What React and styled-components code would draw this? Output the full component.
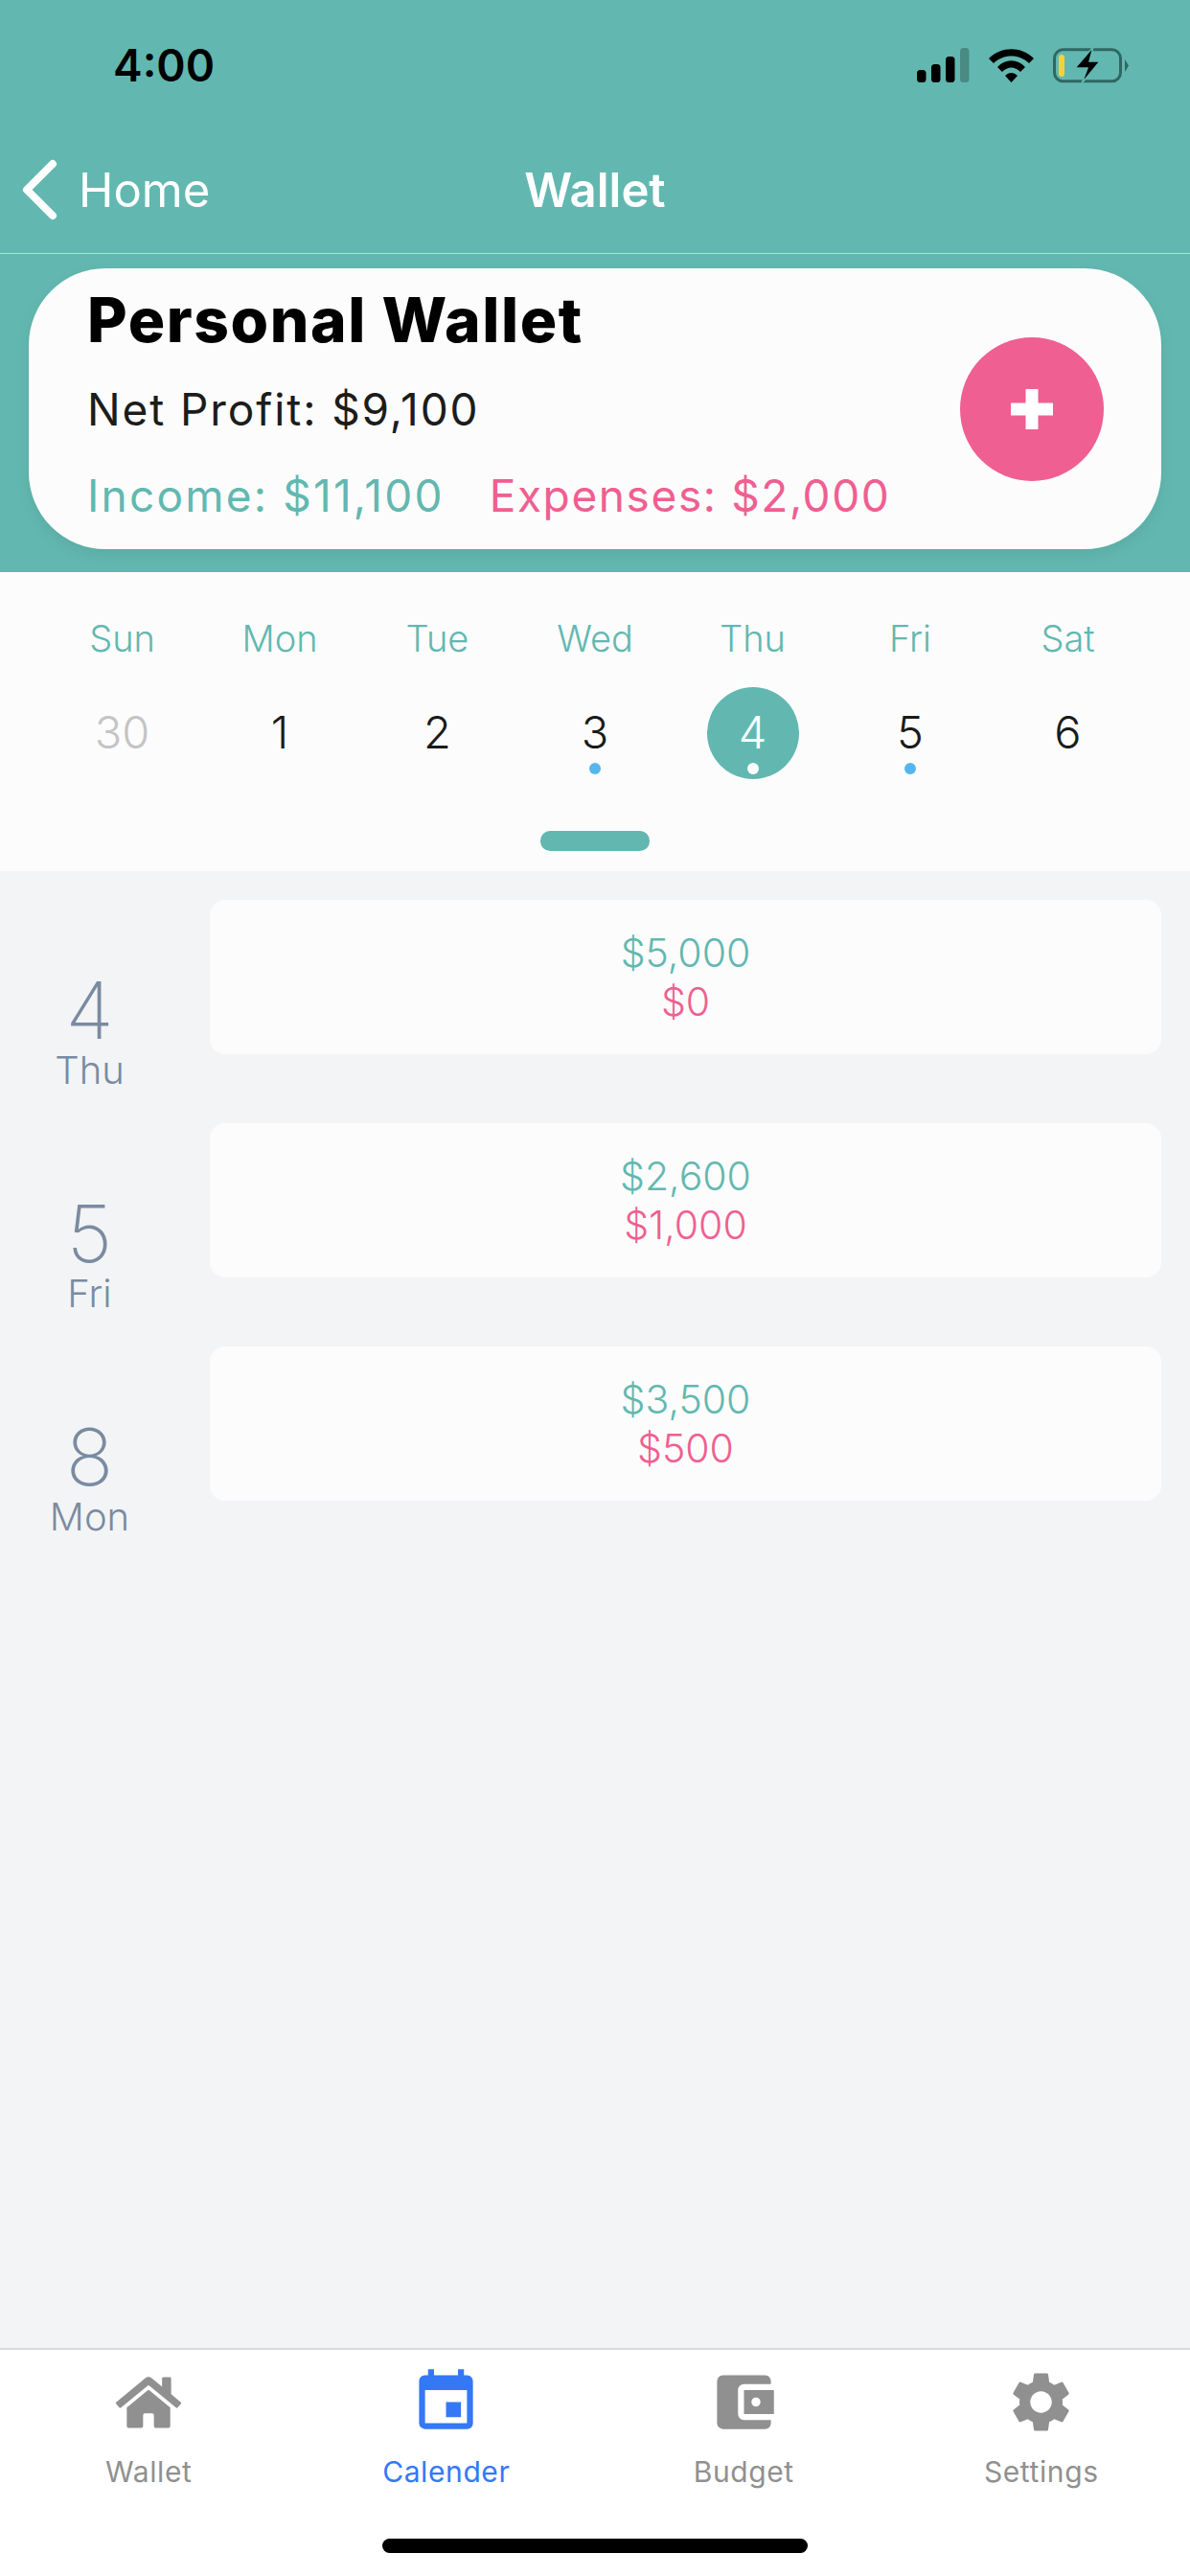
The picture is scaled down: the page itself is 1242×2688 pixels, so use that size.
import React from 'react';
import styled, { createGlobalStyle } from 'styled-components';
import { FaHome } from 'react-icons/fa';
import { MdEvent, MdAccountBalanceWallet, MdSettings } from 'react-icons/md';

const teal = '#62b8b0';
const pink = '#ef5f91';

const days = [
  { name: 'Sun', num: 30, muted: true },
  { name: 'Mon', num: 1 },
  { name: 'Tue', num: 2 },
  { name: 'Wed', num: 3, dot: true },
  { name: 'Thu', num: 4, dot: true, active: true },
  { name: 'Fri', num: 5, dot: true },
  { name: 'Sat', num: 6 }
];

const entries = [
  { day: 4, label: 'Thu', income: '$5,000', expense: '$0' },
  { day: 5, label: 'Fri', income: '$2,600', expense: '$1,000' },
  { day: 8, label: 'Mon', income: '$3,500', expense: '$500' }
];

const tabs = [
  { label: 'Wallet', Icon: FaHome, size: 68 },
  { label: 'Calender', Icon: MdEvent, size: 75, active: true },
  { label: 'Budget', Icon: MdAccountBalanceWallet, size: 75 },
  { label: 'Settings', Icon: MdSettings, size: 75 }
];

const Signal = () => (
  <svg width="55" height="36" viewBox="0 0 55 36">
    <rect x="0" y="23" width="9.5" height="13" rx="3.5" fill="#000" />
    <rect x="15" y="17" width="9.5" height="19" rx="3.5" fill="#000" />
    <rect x="30" y="9" width="9.5" height="27" rx="3.5" fill="#000" />
    <rect x="45" y="0" width="9.5" height="36" rx="3.5" fill="#000" fillOpacity="0.25" />
  </svg>
);

const Wifi = () => (
  <svg width="47" height="35" viewBox="0 0 47 35">
    <path d="M0 10C13 -3 34 -3 47 10L42 15C32 5 15 5 5 15Z" fill="#000" />
    <path d="M9 19C17 10 30 10 38 19L33 24C27 18 20 18 14 24Z" fill="#000" />
    <path d="M17 28C21 24 26 24 30 28L23.5 35Z" fill="#000" />
  </svg>
);

const Battery = () => (
  <svg width="79" height="39" viewBox="0 0 79 39">
    <rect x="1.5" y="2.8" width="69" height="33" rx="9" fill="none" stroke="#2f6763" strokeWidth="3" />
    <rect x="6" y="8" width="6" height="23" rx="3" fill="#f7d13c" />
    <path d="M75 13L79 19.5L75 26Z" fill="#2f6763" />
    <path d="M42 0L23 22H36L30 38L49 15H38Z" fill="#000" stroke={teal} strokeWidth="1.5" />
  </svg>
);

const Chevron = () => (
  <svg width="40" height="64" viewBox="0 0 40 64">
    <path d="M35 5L8 32L35 59" fill="none" stroke="#fff" strokeWidth="8" strokeLinecap="round" strokeLinejoin="round" />
  </svg>
);

const Plus = () => (
  <svg width="44" height="42" viewBox="0 0 44 42">
    <rect x="15.5" y="0" width="13" height="42" fill="#fff" />
    <rect x="0" y="14.5" width="44" height="13" fill="#fff" />
  </svg>
);

export default function App() {
  return (
    <Page>
      <GlobalStyle />
      <Header>
        <StatusBar>
          <Clock>4:00</Clock>
          <StatusIcons>
            <Signal />
            <Wifi />
            <Battery />
          </StatusIcons>
        </StatusBar>
        <NavBar>
          <BackLink>
            <Chevron />
            <span>Home</span>
          </BackLink>
          <NavTitle>Wallet</NavTitle>
        </NavBar>
        <WalletCard>
          <WalletInfo>
            <WalletName>Personal Wallet</WalletName>
            <NetProfit>Net Profit: $9,100</NetProfit>
            <Totals>
              <Total $color={teal} $spacing={2.2}>Income: $11,100</Total>
              <Total $color={pink} $spacing={1.6}>Expenses: $2,000</Total>
            </Totals>
          </WalletInfo>
          <AddButton>
            <Plus />
          </AddButton>
        </WalletCard>
      </Header>

      <Calendar>
        <Week>
          {days.map(d => (
            <DayCol key={d.name}>
              <DayName>{d.name}</DayName>
              <DayNum $muted={d.muted} $active={d.active}>
                {d.num}
                {d.dot ? <Dot $active={d.active} /> : null}
              </DayNum>
            </DayCol>
          ))}
        </Week>
        <Knob />
      </Calendar>

      <Agenda>
        {entries.map(e => (
          <AgendaRow key={e.day}>
            <DateCol>
              <DateNum>{e.day}</DateNum>
              <DateLabel>{e.label}</DateLabel>
            </DateCol>
            <AgendaCard>
              <Amount $color={teal}>{e.income}</Amount>
              <Amount $color={pink}>{e.expense}</Amount>
            </AgendaCard>
          </AgendaRow>
        ))}
      </Agenda>

      <TabBar>
        <Tabs>
          {tabs.map(({ label, Icon, size, active }) => (
            <Tab key={label} $active={active}>
              <TabIcon>
                <Icon size={size} />
              </TabIcon>
              <TabLabel>{label}</TabLabel>
            </Tab>
          ))}
        </Tabs>
        <HomeIndicator />
      </TabBar>
    </Page>
  );
}

const GlobalStyle = createGlobalStyle`
  html, body {
    margin: 0;
    padding: 0;
    background: #f3f4f6;
  }
`;

const Page = styled.div`
  width: 1242px;
  height: 2688px;
  display: flex;
  flex-direction: column;
  overflow: hidden;
  font-family: Inter, 'Liberation Sans', sans-serif;
  background: #f3f4f6;
`;

const Header = styled.div`
  height: 597px;
  background: ${teal};
  display: flex;
  flex-direction: column;
  flex-shrink: 0;
`;

const StatusBar = styled.div`
  height: 132px;
  box-sizing: border-box;
  display: flex;
  align-items: center;
  justify-content: space-between;
  padding: 4px 64px 0 118px;
`;

const Clock = styled.div`
  font-size: 46px;
  font-weight: 600;
  color: #000;
`;

const StatusIcons = styled.div`
  display: flex;
  align-items: center;
  gap: 20px;
`;

const NavBar = styled.div`
  height: 132px;
  border-bottom: 1px solid #c8d5d3;
  position: relative;
  display: flex;
  align-items: center;
  justify-content: center;
`;

const BackLink = styled.div`
  position: absolute;
  left: 20px;
  top: 34px;
  display: flex;
  align-items: center;
  gap: 22px;
  color: #fff;
  font-size: 49px;
  font-weight: 400;
`;

const NavTitle = styled.div`
  color: #fff;
  font-size: 49px;
  font-weight: 600;
`;

const WalletCard = styled.div`
  margin: 15px 30px 0;
  height: 293px;
  box-sizing: border-box;
  padding: 18px 60px 0 61px;
  border-radius: 80px;
  background: #fcfcfc;
  box-shadow: 0 6px 16px rgba(0, 0, 0, 0.07);
  display: flex;
  align-items: center;
  justify-content: space-between;
`;

const WalletInfo = styled.div`
  display: flex;
  flex-direction: column;
  align-self: flex-start;
`;

const WalletName = styled.div`
  font-size: 64px;
  line-height: 72px;
  font-weight: 800;
  letter-spacing: 1.6px;
  color: #000;
`;

const NetProfit = styled.div`
  margin-top: 30px;
  font-size: 46px;
  line-height: 54px;
  letter-spacing: 1.9px;
  color: #1c1c1c;
`;

const Totals = styled.div`
  margin-top: 36px;
  display: flex;
  gap: 47px;
`;

const Total = styled.div`
  font-size: 46px;
  line-height: 54px;
  letter-spacing: ${p => p.$spacing}px;
  color: ${p => p.$color};
`;

const AddButton = styled.div`
  width: 150px;
  height: 150px;
  border-radius: 50%;
  background: ${pink};
  display: flex;
  align-items: center;
  justify-content: center;
  flex-shrink: 0;
  margin-bottom: 18px;
`;

const Calendar = styled.div`
  height: 312px;
  flex-shrink: 0;
  background: #fcfcfc;
  display: flex;
  flex-direction: column;
  align-items: center;
`;

const Week = styled.div`
  width: 100%;
  box-sizing: border-box;
  padding: 44px 0 0 0;
  display: grid;
  grid-template-columns: repeat(7, 164.5px);
  justify-content: center;
`;

const DayCol = styled.div`
  display: flex;
  flex-direction: column;
  align-items: center;
`;

const DayName = styled.div`
  font-size: 38px;
  line-height: 50px;
  font-weight: 300;
  color: ${teal};
`;

const DayNum = styled.div`
  position: relative;
  margin-top: 26px;
  width: 96px;
  height: 96px;
  box-sizing: border-box;
  padding-bottom: 3px;
  border-radius: 50%;
  display: flex;
  align-items: center;
  justify-content: center;
  font-size: 47px;
  font-weight: 300;
  background: ${p => (p.$active ? teal : 'transparent')};
  color: ${p => (p.$active ? '#fff' : p.$muted ? '#c4c4c4' : '#1a1a1a')};
`;

const Dot = styled.span`
  position: absolute;
  left: 42px;
  bottom: 5px;
  width: 12px;
  height: 12px;
  border-radius: 50%;
  background: ${p => (p.$active ? '#fff' : '#55b6ee')};
`;

const Knob = styled.div`
  margin-top: 54px;
  width: 114px;
  height: 21px;
  border-radius: 10px;
  background: ${teal};
`;

const Agenda = styled.div`
  flex: 1;
  box-sizing: border-box;
  padding: 30px 30px 0 0;
  display: flex;
  flex-direction: column;
  gap: 72px;
`;

const AgendaRow = styled.div`
  display: flex;
  height: 161px;
`;

const DateCol = styled.div`
  width: 219px;
  flex-shrink: 0;
  display: flex;
  flex-direction: column;
  align-items: center;
  padding-right: 32px;
  box-sizing: border-box;
  padding-top: 79px;
`;

const DateNum = styled.div`
  font-size: 82px;
  line-height: 74px;
  font-weight: 200;
  color: #7a8ba1;
`;

const DateLabel = styled.div`
  font-size: 40px;
  line-height: 50px;
  font-weight: 300;
  color: #7a8ba1;
`;

const AgendaCard = styled.div`
  flex: 1;
  border-radius: 16px;
  background: #fcfcfc;
  display: flex;
  flex-direction: column;
  align-items: center;
  justify-content: center;
`;

const Amount = styled.div`
  font-size: 41px;
  line-height: 51px;
  font-weight: 300;
  color: ${p => p.$color};
`;

const TabBar = styled.div`
  height: 238px;
  flex-shrink: 0;
  box-sizing: border-box;
  background: #fff;
  border-top: 2px solid #d9dadc;
  display: flex;
  flex-direction: column;
  align-items: center;
`;

const Tabs = styled.div`
  width: 100%;
  display: grid;
  grid-template-columns: repeat(4, 310.5px);
`;

const Tab = styled.div`
  display: flex;
  flex-direction: column;
  align-items: center;
  color: ${p => (p.$active ? '#3478f6' : '#909090')};
`;

const TabIcon = styled.div`
  height: 75px;
  margin-top: 17px;
  display: flex;
  align-items: center;
  justify-content: center;
`;

const TabLabel = styled.div`
  margin-top: 15px;
  font-size: 30px;
  line-height: 40px;
  letter-spacing: 0.6px;
`;

const HomeIndicator = styled.div`
  margin-top: 50px;
  width: 444px;
  height: 15px;
  border-radius: 8px;
  background: #000;
`;
